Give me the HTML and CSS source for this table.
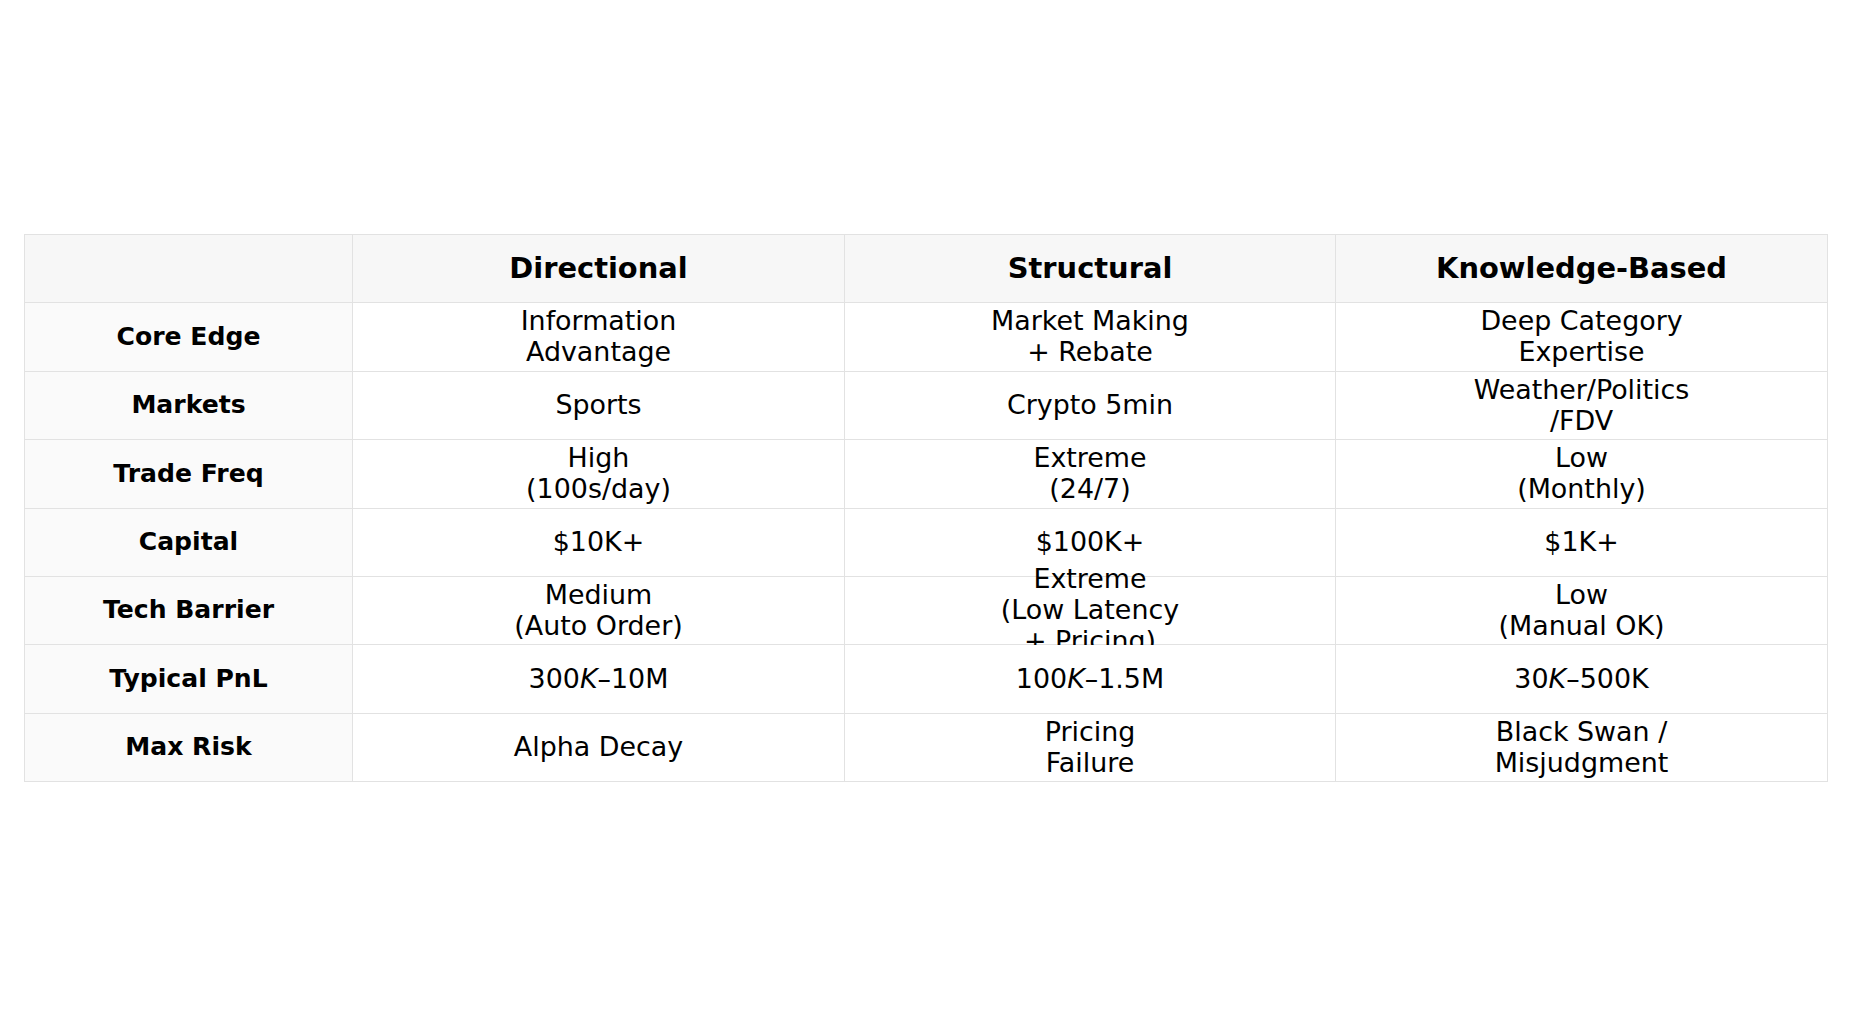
FILE: index.html
```html
<!DOCTYPE html>
<html>
<head>
<meta charset="utf-8">
<link rel="stylesheet" href="styles.css">
</head>
<body>
<div class="page">
  <div class="table">
    <div class="cell corner"></div>
    <div class="cell head">Directional</div>
    <div class="cell head">Structural</div>
    <div class="cell head">Knowledge-Based</div>

    <div class="cell label">Core Edge</div>
    <div class="cell">Information<br>Advantage</div>
    <div class="cell">Market Making<br>+ Rebate</div>
    <div class="cell">Deep Category<br>Expertise</div>

    <div class="cell label">Markets</div>
    <div class="cell">Sports</div>
    <div class="cell">Crypto 5min</div>
    <div class="cell">Weather/Politics<br>/FDV</div>

    <div class="cell label">Trade Freq</div>
    <div class="cell">High<br>(100s/day)</div>
    <div class="cell">Extreme<br>(24/7)</div>
    <div class="cell">Low<br>(Monthly)</div>

    <div class="cell label">Capital</div>
    <div class="cell">$10K+</div>
    <div class="cell">$100K+</div>
    <div class="cell">$1K+</div>

    <div class="cell label">Tech Barrier</div>
    <div class="cell">Medium<br>(Auto Order)</div>
    <div class="cell">Extreme<br>(Low Latency<br>+ Pricing)</div>
    <div class="cell">Low<br>(Manual OK)</div>

    <div class="cell label">Typical PnL</div>
    <div class="cell">300<i class="mi">K</i>–10M</div>
    <div class="cell">100<i class="mi">K</i>–1.5M</div>
    <div class="cell">30<i class="mi">K</i>–500K</div>

    <div class="cell label">Max Risk</div>
    <div class="cell">Alpha Decay</div>
    <div class="cell">Pricing<br>Failure</div>
    <div class="cell">Black Swan /<br>Misjudgment</div>
  </div>
</div>
</body>
</html>
```

FILE: styles.css
```css
html, body {
  margin: 0;
  padding: 0;
  background: #ffffff;
}

body {
  font-family: "DejaVu Sans", "Liberation Sans", sans-serif;
  color: #000000;
  width: 1850px;
  height: 1016px;
  overflow: hidden;
}

.page {
  padding-top: 234px;
  padding-left: 24px;
}

.table {
  display: grid;
  grid-template-columns: 327px 491px 490px 491px;
  grid-template-rows: 67px 68px 67px 68px 67px 67px 68px 67px;
  gap: 1px;
  width: max-content;
  border: 1px solid #e2e2e2;
  background: #e2e2e2;
}

.cell {
  position: relative;
  background: #ffffff;
  display: flex;
  align-items: center;
  justify-content: center;
  text-align: center;
  font-size: 26.9px;
  line-height: 30.7px;
  white-space: nowrap;
}

.head {
  background: #f7f7f7;
  font-weight: bold;
  font-size: 28.9px;
}

.corner {
  background: #f7f7f7;
}

.label {
  background: #fafafa;
  font-weight: bold;
  font-size: 25.1px;
}

.mi {
  font-style: italic;
}
```
